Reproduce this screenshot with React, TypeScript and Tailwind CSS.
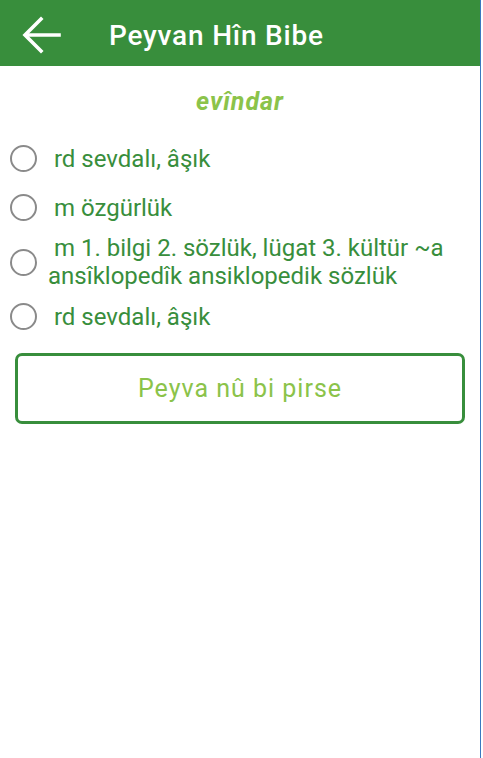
import React from "react";

const options = [
  " rd sevdalı, âşık",
  " m özgürlük",
  " m 1. bilgi 2. sözlük, lügat 3. kültür ~a ansîklopedîk ansiklopedik sözlük",
  " rd sevdalı, âşık",
];

export default function App() {
  return (
    <div className="flex h-[758px] w-[483px] bg-white" style={{ fontFamily: "Roboto, 'Noto Sans', sans-serif" }}>
      <div className="flex w-[480px] flex-col">
        <div className="flex h-[66px] items-center bg-[#388e3c]">
          <div className="ml-[22px] mt-[4px] flex w-[40px] items-center">
            <svg width="40" height="38" viewBox="0 0 40 38" fill="none" stroke="white" strokeWidth="3.6" strokeLinecap="square">
              <path d="M37 19H5" />
              <path d="M19 3L3 19L19 35" strokeLinejoin="miter" />
            </svg>
          </div>
          <div className="ml-[47px] mt-[5px] text-[28px] font-medium leading-none tracking-[0.8px] text-white">Peyvan Hîn Bibe</div>
        </div>
        <div className="flex h-[67px] items-center justify-center pt-[4px] text-[25px] font-bold italic tracking-[1px] text-[#8bc34a]">
          evîndar
        </div>
        <div className="flex flex-col pt-[1px]">
          {options.map((o, i) => (
            <div key={i} className="flex min-h-[49px] items-center py-[2px]">
              <div className="ml-[10px] h-[27px] w-[27px] shrink-0 rounded-full border-2 border-[#8a8a8a]" />
              <div className="ml-[11px] whitespace-pre-wrap pr-[16px] text-[24px] leading-[28px] text-[#388e3c]">{o}</div>
            </div>
          ))}
        </div>
        <div className="mx-[15px] mt-[12px] flex h-[71px] items-center justify-center rounded-[7px] border-[3px] border-[#388e3c] text-[25px] tracking-[1px] text-[#8bc34a]">
          Peyva nû bi pirse
        </div>
      </div>
      <div className="flex w-[3px] flex-col">
        <div className="h-full w-[1px] bg-[#3a78c0]" />
      </div>
    </div>
  );
}
